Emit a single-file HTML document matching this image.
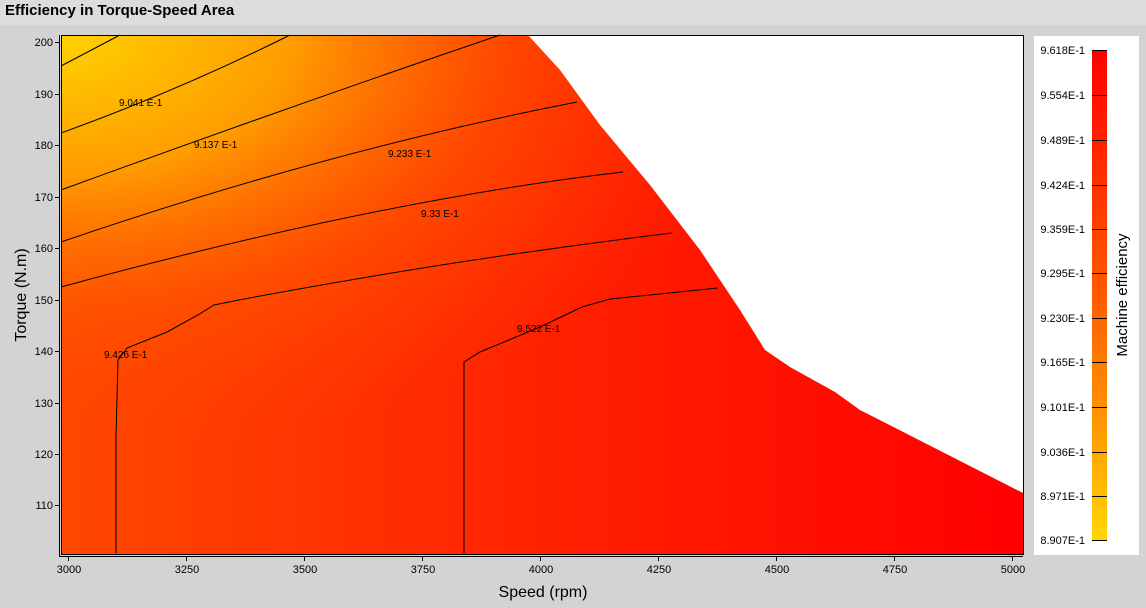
<!DOCTYPE html>
<html><head><style>
body{margin:0;width:1146px;height:603px;background:#d3d3d3;font-family:"Liberation Sans",sans-serif;overflow:hidden}
</style></head><body>
<svg width="1146" height="603" xmlns="http://www.w3.org/2000/svg" font-family="Liberation Sans, sans-serif">
<defs>
<linearGradient id="h" x1="0" y1="0" x2="1" y2="0">
<stop offset="0" stop-color="#ff4800"/><stop offset="0.5" stop-color="#ff2200"/><stop offset="1" stop-color="#ff0000"/>
</linearGradient>
<radialGradient id="r" cx="61" cy="35" r="700" gradientUnits="userSpaceOnUse" gradientTransform="translate(61 35) scale(1 0.6) translate(-61 -35)">
<stop offset="0" stop-color="#ffd200" stop-opacity="1"/>
<stop offset="0.33" stop-color="#ff9c00" stop-opacity="1"/>
<stop offset="0.65" stop-color="#ff5a00" stop-opacity="0.6"/>
<stop offset="1" stop-color="#ff4000" stop-opacity="0"/>
</radialGradient>
<linearGradient id="cb" x1="0" y1="0" x2="0" y2="1">
<stop offset="0" stop-color="#ff0000"/><stop offset="0.5" stop-color="#ff5a00"/><stop offset="0.8" stop-color="#ffa000"/><stop offset="1" stop-color="#ffd800"/>
</linearGradient>
</defs>
<rect x="0" y="0" width="1146" height="25" fill="#dcdcdc"/>
<text x="5" y="15" font-size="15" font-weight="bold" fill="#000">Efficiency in Torque-Speed Area</text>
<rect x="61" y="35" width="962" height="520" fill="url(#h)"/>
<rect x="61" y="35" width="962" height="520" fill="url(#r)"/>
<polygon points="528,35 560,70 600,125 650,185 700,250 740,310 765,350 790,367 835,392 860,410 1023,493 1023,35" fill="#fff"/>
<g fill="none" stroke="#000" stroke-width="1">
<path d="M61,66 L120,35"/>
<path d="M61,133 Q180,90 290,35"/>
<path d="M61,190 Q280,110 500,35"/>
<path d="M61,242 Q330,150 577,102"/>
<path d="M61,287 Q380,200 623,172"/>
<path d="M116,553 L116,437 L118,360 L127,348 L167,332 L198,315 L214,305 L239,300 Q450,260 672,233"/>
<path d="M464,553 L464,468 L464,362 L480,352 L540,327 L582,307 L610,299 L718,288"/>
</g>
<g font-size="10" fill="#000">
<text x="119" y="106">9.041 E-1</text>
<text x="194" y="148">9.137 E-1</text>
<text x="388" y="157">9.233 E-1</text>
<text x="421" y="217">9.33 E-1</text>
<text x="104" y="358">9.426 E-1</text>
<text x="517" y="332">9.522 E-1</text>
</g>
<g stroke="#000" fill="none">
<path d="M59.5,35 V556.5 H1023"/>
<path d="M61.5,35 V554.5 H1023"/>
<path d="M1023.5,35 V555 M61,35.5 H1023"/>
</g>
<g font-size="11" fill="#000" text-anchor="end">
<g stroke="#000"><path d="M55,42.5h4M55,94.5h4M55,145.5h4M55,197.5h4M55,248.5h4M55,300.5h4M55,351.5h4M55,403.5h4M55,454.5h4M55,505.5h4"/></g>
<text x="53" y="46">200</text><text x="53" y="98">190</text><text x="53" y="149">180</text><text x="53" y="201">170</text><text x="53" y="252">160</text><text x="53" y="304">150</text><text x="53" y="355">140</text><text x="53" y="407">130</text><text x="53" y="458">120</text><text x="53" y="509">110</text>
</g>
<g font-size="11" fill="#000" text-anchor="middle">
<g stroke="#000"><path d="M68.5,557v4M186.5,557v4M304.5,557v4M422.5,557v4M540.5,557v4M658.5,557v4M776.5,557v4M894.5,557v4M1012.5,557v4"/></g>
<text x="69" y="573">3000</text><text x="187" y="573">3250</text><text x="305" y="573">3500</text><text x="423" y="573">3750</text><text x="541" y="573">4000</text><text x="659" y="573">4250</text><text x="777" y="573">4500</text><text x="895" y="573">4750</text><text x="1013" y="573">5000</text>
</g>
<text x="543" y="597" font-size="16" text-anchor="middle">Speed (rpm)</text>
<text transform="translate(26 295) rotate(-90)" font-size="16" text-anchor="middle">Torque (N.m)</text>
<rect x="1034" y="36" width="105" height="519" fill="#fff"/>
<rect x="1092" y="50" width="15" height="490" fill="url(#cb)"/>
<g stroke="#000"><path d="M1092,50.5h15M1092,95.5h15M1092,140.5h15M1092,185.5h15M1092,229.5h15M1092,273.5h15M1092,318.5h15M1092,362.5h15M1092,407.5h15M1092,452.5h15M1092,496.5h15M1092,540.5h15"/></g>
<g font-size="11" fill="#000" text-anchor="end">
<text x="1085" y="54">9.618E-1</text><text x="1085" y="99">9.554E-1</text><text x="1085" y="144">9.489E-1</text><text x="1085" y="189">9.424E-1</text><text x="1085" y="233">9.359E-1</text><text x="1085" y="277">9.295E-1</text><text x="1085" y="322">9.230E-1</text><text x="1085" y="366">9.165E-1</text><text x="1085" y="411">9.101E-1</text><text x="1085" y="456">9.036E-1</text><text x="1085" y="500">8.971E-1</text><text x="1085" y="544">8.907E-1</text>
</g>
<text transform="translate(1127 295) rotate(-90)" font-size="15" text-anchor="middle">Machine efficiency</text>
</svg>
</body></html>
